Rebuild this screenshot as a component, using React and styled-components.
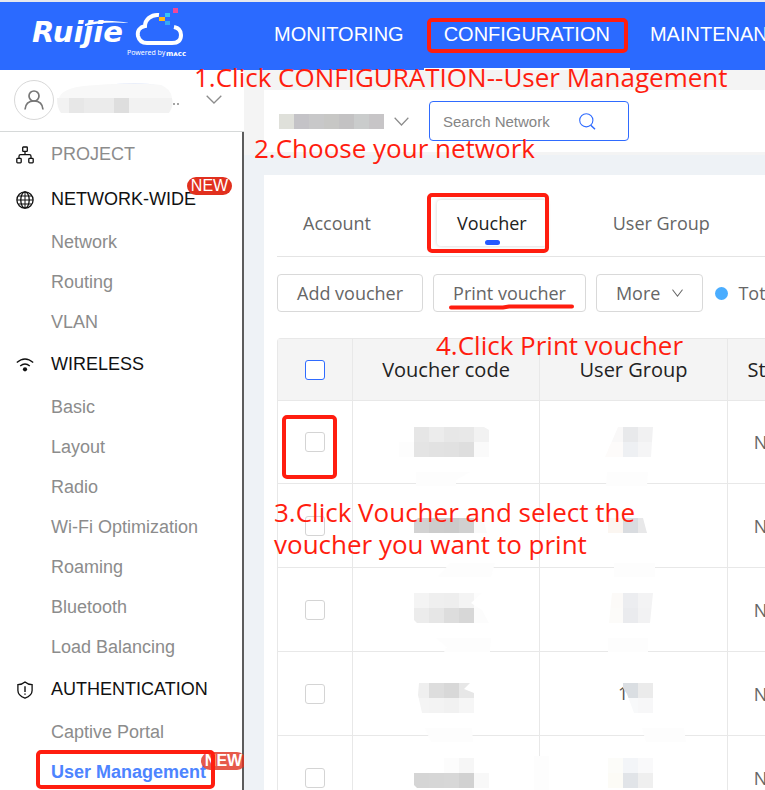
import React from 'react';
import styled, { createGlobalStyle } from 'styled-components';

const NAV = [
  { label: 'MONITORING' },
  { label: 'CONFIGURATION', active: true },
  { label: 'MAINTENANCE' },
];

const MENU = [
  { title: 'PROJECT', icon: 'project', muted: true, items: [] },
  {
    title: 'NETWORK-WIDE',
    icon: 'globe',
    isNew: true,
    items: ['Network', 'Routing', 'VLAN'],
  },
  {
    title: 'WIRELESS',
    icon: 'wifi',
    items: [
      'Basic',
      'Layout',
      'Radio',
      'Wi-Fi Optimization',
      'Roaming',
      'Bluetooth',
      'Load Balancing',
    ],
  },
  {
    title: 'AUTHENTICATION',
    icon: 'shield',
    items: ['Captive Portal', 'User Management'],
  },
];

const TABS = ['Account', 'Voucher', 'User Group'];

// Hidden values: 15px blocks [x, y, color], an optional outline and faint patches
const ROWS = [
  {
    id: 1,
    code: {
      clip: '-1,0 84,0 89,3 89,30 -1,30',
      blocks: [
        [14, 0, '#e6e6e6'], [29, 0, '#ececec'], [44, 0, '#e7e7e7'], [59, 0, '#e8e8e8'], [74, 0, '#f2f2f2'],
        [-1, 15, '#fdfdfd'], [14, 15, '#e4e4e4'], [29, 15, '#e2e2e2'], [44, 15, '#e1e1e1'], [59, 15, '#dedede'], [74, 15, '#fafafa'],
      ],
      patches: ['16,45 70,45 56,53 56,59 16,59'],
    },
    group: {
      clip: '30,0 65,0 63,30 17,30 24,14',
      blocks: [
        [20, 0, '#f9f8f8'], [35, 0, '#e8e9eb'], [50, 0, '#f1f1f2'],
        [16, 15, '#fdfbfa'], [20, 15, '#fdfbfa'], [35, 15, '#eef0f3'], [50, 15, '#f5f5f6'],
      ],
      patches: ['19,45 60,45 59,59 18,59'],
    },
  },
  {
    id: 2,
    code: {
      clip: '18,7 83,7 87,22 14,22 14,11',
      blocks: [[14, 7, '#d2d2d2'], [29, 7, '#cccccc'], [44, 7, '#cbcbcb'], [59, 7, '#d0d0d0'], [74, 7, '#fafafa']],
      patches: ['50,52 95,52 91,66 38,66'],
    },
    group: {
      clip: '20,7 55,7 59,22 20,22',
      blocks: [[20, 7, '#fbf6f1'], [35, 7, '#d9dce0'], [50, 7, '#e8e8e9']],
      patches: ['26,52 67,52 67,66 26,66'],
    },
  },
  {
    id: 3,
    code: {
      clip: '14,-2 82,-2 71,8 82,15 89,28 17,28 14,25',
      blocks: [
        [14, -2, '#f4f4f4'], [29, -2, '#efefef'], [44, -2, '#eeeeee'], [59, -2, '#f4f4f4'], [74, -2, '#fdfdfd'],
        [14, 13, '#ececec'], [29, 13, '#e6e6e6'], [44, 13, '#dddddd'], [59, 13, '#d7d7d7'], [74, 13, '#fcfcfc'],
      ],
      patches: ['36,43 91,43 90,57 44,57 47,52'],
    },
    group: {
      clip: '24,-2 65,-2 62,28 21,28',
      blocks: [
        [20, -2, '#fcfaf8'], [35, -2, '#ecedf0'], [50, -2, '#f3f3f4'],
        [20, 13, '#fcfbf9'], [35, 13, '#eaebee'], [50, 13, '#f2f2f3'],
      ],
      patches: ['20,43 60,43 60,57 20,57'],
    },
  },
  {
    id: 4,
    code: {
      clip: '19,4 70,4 64,10 74,14 74,34 22,34 18,16',
      blocks: [
        [14, 4, '#efefef'], [29, 4, '#dddddd'], [44, 4, '#d8d8d8'], [59, 4, '#e7e7e7'],
        [14, 19, '#f4f4f4'], [29, 19, '#f3f3f3'], [44, 19, '#f1f1f1'], [59, 19, '#f6f6f6'],
      ],
      patches: ['25,49 72,49 73,63 31,63'],
    },
    group: {
      text: '1',
      clip: '35,4 65,4 65,34 46,34 39,15 35,9',
      blocks: [
        [35, 4, '#dadee2'], [50, 4, '#ebebeb'],
        [35, 19, '#f8f9fa'], [50, 19, '#f7f7f8'],
      ],
      patches: ['54,49 96,49 98,63 58,63'],
    },
  },
  {
    id: 5,
    code: {
      clip: '14,-5 74,-5 89,10 89,25 17,25 14,22',
      blocks: [
        [44, -5, '#fcfcfc'], [59, -5, '#f6f6f6'],
        [14, 10, '#d5d5d5'], [29, 10, '#d6d6d6'], [44, 10, '#d7d7d7'], [59, 10, '#d1d1d1'], [74, 10, '#f8f8f8'],
      ],
      patches: ['134,-7 149,-7 149,30 134,30'],
    },
    group: {
      clip: '20,-5 65,-5 65,25 20,25',
      blocks: [
        [20, -5, '#fcfcf9'], [35, -5, '#f3f5f8'], [50, -5, '#f9f9fa'],
        [20, 10, '#fcfbf6'], [35, 10, '#e1e4e8'], [50, 10, '#efefef'],
      ],
      patches: [],
    },
  },
];

function Redacted({ id, data }) {
  return (
    <Mosaic width="90" height="30" viewBox="1 0 90 30" aria-hidden="true">
      <clipPath id={id}>
        <polygon points={data.clip} />
      </clipPath>
      {data.patches.map((points) => (
        <polygon key={points} points={points} fill="#fdfdfd" />
      ))}
      {data.text && (
        <text x="30" y="21" fontSize="18" fill="#555">
          {data.text}
        </text>
      )}
      <g clipPath={`url(#${id})`} shapeRendering="crispEdges">
        {data.blocks.map(([x, y, fill]) => (
          <rect key={`${x}-${y}`} x={x} y={y} width="15" height="15" fill={fill} />
        ))}
      </g>
    </Mosaic>
  );
}

function Logo() {
  return (
    <svg width="170" height="56" viewBox="0 0 170 56" role="img" aria-label="Ruijie MACC">
      <text
        x="0"
        y="34"
        fill="#fff"
        fontFamily="DejaVu Sans, sans-serif"
        fontSize="29"
        fontWeight="700"
        fontStyle="italic"
      >
        Ruijie
      </text>
      <path d="M53 16C68 11 84 13 97 15C82 14 68 14 53 18Z" fill="#fff" />
      <path
        d="M127 7C119 6 113 12 113 18C108 19 105 23 106 28C107 32 110 35 115 35H140C146 35 149 32 149 27C149 23 147 20 142 19"
        fill="none"
        stroke="#fff"
        strokeWidth="4"
      />
      <rect x="127" y="9" width="6" height="4" fill="#ffb91a" />
      <rect x="133" y="5" width="5" height="4" fill="#35c3f7" />
      <rect x="133" y="13" width="5" height="4" fill="#35a9f7" />
      <rect x="141" y="0" width="5" height="5" fill="#f0489b" />
      <text x="95" y="47" fill="#fff" fontFamily="Noto Sans, sans-serif" fontSize="7">
        Powered by
      </text>
      <text x="134" y="48" fill="#fff" fontFamily="DejaVu Sans, sans-serif" fontSize="7" fontWeight="700">
        mᴀcc
      </text>
    </svg>
  );
}

function Chevron({ width, height, color = '#8c8c8c' }) {
  return (
    <svg width={width} height={height} viewBox="0 0 16 9" preserveAspectRatio="none" fill="none" stroke={color} strokeWidth="1.3" aria-hidden="true">
      <path d="M.7.7 8 8 15.3.7" />
    </svg>
  );
}

function MenuIcon({ name }) {
  return (
    <svg width="18" height="18" viewBox="0 0 18 18" fill="none" stroke="#111" strokeWidth="1.3" aria-hidden="true">
      {name === 'project' && (
        <>
          <rect x="6.7" y="1" width="4.6" height="4.4" rx=".6" />
          <rect x=".8" y="12.4" width="4.4" height="4.4" rx=".8" />
          <rect x="12.8" y="12.4" width="4.4" height="4.4" rx=".8" />
          <path d="M9 5.4V8.6M3 12.2V10.3Q3 8.7 4.6 8.7H13.4Q15 8.7 15 10.3V12.2" />
        </>
      )}
      {name === 'globe' && (
        <>
          <circle cx="9" cy="9" r="8.1" />
          <ellipse cx="9" cy="9" rx="4.2" ry="8.1" />
          <path d="M1 9H17M2.2 5H15.8M2.2 13H15.8M9 1V17" strokeWidth="1" />
        </>
      )}
      {name === 'wifi' && (
        <>
          <path d="M.8 6.6Q9-.6 17.2 6.6M4.2 10.1Q9 5.9 13.8 10.1" />
          <circle cx="9" cy="13.3" r="2.1" fill="#111" stroke="none" />
        </>
      )}
      {name === 'shield' && (
        <>
          <path d="M9 1C7 2.8 4.5 3.6 1.9 3.7V9.6C1.9 13.4 5 15.8 9 17.2C13 15.8 16.1 13.4 16.1 9.6V3.7C13.5 3.6 11 2.8 9 1Z" />
          <path d="M9 5.2V11M9 12.4V13.8" strokeWidth="1.4" />
        </>
      )}
    </svg>
  );
}

function Sidebar() {
  return (
    <Side>
      <Profile>
        <Avatar>
          <svg width="20" height="20" viewBox="0 0 20 20" fill="none" stroke="#777" strokeWidth="1.7" aria-hidden="true">
            <circle cx="10" cy="6" r="5" />
            <path d="M1 19.5C1.4 14 5 11 10 11S18.6 14 19 19.5" />
          </svg>
        </Avatar>
        <svg width="124" height="34" viewBox="0 0 124 34" aria-hidden="true">
          <path d="M46 3Q76-3 106 3Z" fill="#dfe7fb" />
          <path d="M2 15Q6 3 40 2Q78-1 104 2Q114 6 115 15Z" fill="#f8f8f8" />
          <path d="M0 15H115Q117 23 112 30H4Q0 25 0 15Z" fill="#f2f2f2" />
          <rect x="12" y="15" width="15" height="15" fill="#e7e7e7" />
          <rect x="27" y="15" width="30" height="15" fill="#ebebeb" />
          <rect x="57" y="15" width="15" height="15" fill="#dedede" />
          <path d="M116 21h2M120 21h2" stroke="#888" strokeWidth="1.5" />
        </svg>
        <PlainButton type="button" aria-label="Switch account">
          <Chevron width={16} height={9} />
        </PlainButton>
      </Profile>
      <Menu>
        {MENU.map((group) => (
          <React.Fragment key={group.title}>
            <GroupLink href="#" $muted={group.muted}>
              <MenuIcon name={group.icon} />
              <span>{group.title}</span>
              {group.isNew && <Badge>NEW</Badge>}
            </GroupLink>
            {group.items.map((item) => (
              <ItemLink key={item} href="#" $active={item === 'User Management'}>
                {item}
                {item === 'User Management' && <Badge $faded>NEW</Badge>}
              </ItemLink>
            ))}
          </React.Fragment>
        ))}
      </Menu>
    </Side>
  );
}

function NetworkPicker() {
  const shades = ['#dfe0da', '#c4c3c7', '#c8c8c9', '#c7c7c5', '#c3c2c3', '#cacccc', '#c7c5c7'];
  return (
    <NetworkBar>
      <NetworkButton type="button" aria-label="Choose network">
        <svg width="105" height="15" viewBox="0 0 105 15" shapeRendering="crispEdges" aria-hidden="true">
          {shades.map((fill, i) => (
            <rect key={i} x={i * 15} width="15" height="15" fill={fill} />
          ))}
        </svg>
        <Chevron width={15} height={9} />
      </NetworkButton>
      <Search>
        <input type="text" placeholder="Search Network" aria-label="Search Network" />
        <PlainButton type="button" aria-label="Search">
          <svg width="17" height="17" viewBox="0 0 17 17" fill="none" stroke="#2f6bff" strokeWidth="1.1" aria-hidden="true">
            <circle cx="7.3" cy="7.3" r="6.6" />
            <path d="M11.8 12.2 16 16.2" strokeWidth="1.5" />
          </svg>
        </PlainButton>
      </Search>
    </NetworkBar>
  );
}

function VoucherTable() {
  return (
    <Table>
      <colgroup>
        <col width="75" />
        <col width="187" />
        <col width="188" />
        <col width="98" />
      </colgroup>
      <thead>
        <tr>
          <th>
            <Checkbox type="checkbox" aria-label="Select all vouchers" $accent />
          </th>
          <th>Voucher code</th>
          <th>User Group</th>
          <th>Status</th>
        </tr>
      </thead>
      <tbody>
        {ROWS.map((row) => (
          <tr key={row.id}>
            <td>
              <Checkbox type="checkbox" aria-label={`Select voucher ${row.id}`} />
            </td>
            <td>
              <Redacted id={`code-${row.id}`} data={row.code} />
            </td>
            <td>
              <Redacted id={`group-${row.id}`} data={row.group} />
            </td>
            <td>None</td>
          </tr>
        ))}
      </tbody>
    </Table>
  );
}

function Guide() {
  return (
    <Overlay>
      <Frame $x={427} $y={18} $w={201} $h={35} />
      <Frame $x={427} $y={193} $w={122} $h={60} />
      <Frame $x={282} $y={415} $w={55} $h={64} />
      <Frame $x={36} $y={750} $w={179} $h={39} />
      <Underline width="126" height="6" viewBox="0 0 126 6" aria-hidden="true">
        <path d="M2 3.5H54L60 2.5H123" fill="none" stroke="#ff1d0f" strokeWidth="4" strokeLinecap="round" />
      </Underline>
      <Note $x={194} $y={61}>1.Click CONFIGURATION--User Management</Note>
      <Note $x={254} $y={132}>2.Choose your network</Note>
      <Note $x={274} $y={496}>
        3.Click Voucher and select the
        <br />
        voucher you want to print
      </Note>
      <Note $x={436} $y={329}>4.Click Print voucher</Note>
    </Overlay>
  );
}

function App() {
  return (
    <Page>
      <GlobalStyle />
      <TopBar>
        <Logo />
        <nav>
          {NAV.map((item) => (
            <NavLink key={item.label} href="#" $active={item.active}>
              {item.label}
            </NavLink>
          ))}
        </nav>
      </TopBar>
      <Body>
        <Sidebar />
        <Main>
          <NetworkArea>
            <NetworkPicker />
          </NetworkArea>
          <Card>
            <Tabs role="tablist">
              {TABS.map((tab) => (
                <Tab key={tab} type="button" role="tab" aria-selected={tab === 'Voucher'} $active={tab === 'Voucher'}>
                  {tab}
                </Tab>
              ))}
            </Tabs>
            <Toolbar>
              <Button type="button">Add voucher</Button>
              <Button type="button">Print voucher</Button>
              <Button type="button">
                More
                <Chevron width={11} height={8} color="#666" />
              </Button>
              <Total>Total</Total>
            </Toolbar>
            <VoucherTable />
          </Card>
        </Main>
      </Body>
      <Guide />
    </Page>
  );
}

const GlobalStyle = createGlobalStyle`
  * {
    box-sizing: border-box;
  }

  body {
    margin: 0;
    font-family: 'Liberation Sans', Arial, sans-serif;
    font-size: 18px;
    background: #fff;
  }

  a {
    color: inherit;
    text-decoration: none;
  }

  button,
  input {
    font: inherit;
    color: inherit;
  }

  svg {
    display: block;
    flex-shrink: 0;
  }
`;

const Page = styled.div`
  position: relative;
  display: flex;
  flex-direction: column;
  height: 100vh;
  overflow: hidden;
`;

const TopBar = styled.header`
  display: flex;
  flex-shrink: 0;
  height: 70px;
  padding: 6px 0 0 32px;
  border-top: 2px solid #e6e8ee;
  background: #2b6aff;
  color: #fff;

  nav {
    display: flex;
    margin: -6px 0 0 52px;
  }
`;

const NavLink = styled.a`
  flex-shrink: 0;
  padding: 0 20px;
  border-bottom: 2px solid ${(props) => (props.$active ? '#fff' : 'transparent')};
  font-size: 20px;
  line-height: 64px;
`;

const Body = styled.div`
  display: flex;
  flex: 1;
  min-height: 0;
`;

const Side = styled.aside`
  display: flex;
  flex-direction: column;
  flex: 0 0 244px;
  overflow: hidden;
`;

const Profile = styled.div`
  display: flex;
  align-items: center;
  flex-shrink: 0;
  height: 62px;
  padding: 0 20px 2px 14px;
  border-bottom: 1px solid #d6d9d9;

  button {
    margin-left: auto;
  }
`;

const Avatar = styled.div`
  display: flex;
  align-items: center;
  justify-content: center;
  width: 40px;
  height: 40px;
  margin-right: 3px;
  border: 1px solid #d8d8d8;
  border-radius: 50%;
`;

const PlainButton = styled.button`
  padding: 2px;
  border: 0;
  background: none;
`;

const Menu = styled.nav`
  flex: 1;
  border-right: 2px solid #5c5c5c;
`;

const GroupLink = styled.a`
  position: relative;
  display: flex;
  align-items: center;
  gap: 17px;
  height: 45px;
  padding-left: 16px;
  color: ${(props) => (props.$muted ? '#8c8c8c' : '#111')};
`;

const ItemLink = styled.a`
  position: relative;
  display: block;
  padding-left: 51px;
  line-height: 40px;
  color: ${(props) => (props.$active ? '#4d84ff' : '#8c8c8c')};
  font-weight: ${(props) => (props.$active ? 700 : 400)};
`;

const Badge = styled.span`
  position: absolute;
  top: 0;
  left: ${(props) => (props.$faded ? 201 : 187)}px;
  width: 45px;
  border-radius: 9px;
  background: #e1301e;
  color: #fff;
  font-size: 16px;
  line-height: 18px;
  text-align: center;
  opacity: ${(props) => (props.$faded ? 0.8 : 1)};
`;

const Main = styled.main`
  flex: 1;
  min-width: 0;
  overflow: hidden;
  background: #eef2f6;
`;

const NetworkArea = styled.div`
  padding: 20px 0 3px 20px;
  background: #f4f4f4;
`;

const NetworkBar = styled.div`
  display: flex;
  align-items: center;
  gap: 20px;
  height: 62px;
  padding-left: 15px;
  background: #fff;
`;

const NetworkButton = styled.button`
  display: flex;
  align-items: center;
  gap: 10px;
  padding: 0;
  border: 0;
  background: none;
`;

const Search = styled.div`
  display: flex;
  align-items: center;
  width: 200px;
  height: 40px;
  padding: 0 30px 0 13px;
  border: 1px solid #2f6bff;
  border-radius: 4px;

  input {
    flex: 1;
    min-width: 0;
    padding: 0;
    border: 0;
    outline: 0;
    font-size: 15px;
  }

  input::placeholder {
    color: #858585;
  }
`;

const Card = styled.section`
  margin: 20px 0 0 20px;
  padding: 18px 0 0 13px;
  background: #fff;
  color: #666;
  font-family: 'Open Sans', 'Noto Sans', sans-serif;
`;

const Tabs = styled.div`
  display: flex;
  gap: 46px;
  height: 64px;
  padding: 7px 0 10px 6px;
  border-bottom: 1px solid #e4e4e4;
`;

const Tab = styled.button`
  position: relative;
  flex-shrink: 0;
  padding: 0 20px;
  border: 0;
  border-radius: 4px;
  background: #fff;
  color: ${(props) => (props.$active ? '#222' : '#666')};
  box-shadow: ${(props) => (props.$active ? '0 0 4px rgba(0, 0, 0, 0.18)' : 'none')};

  &::after {
    content: '';
    position: absolute;
    bottom: 1px;
    left: calc(50% - 7px);
    display: ${(props) => (props.$active ? 'block' : 'none')};
    width: 15px;
    height: 5px;
    border-radius: 3px;
    background: #2458ff;
  }
`;

const Toolbar = styled.div`
  display: flex;
  align-items: center;
  gap: 10px;
  padding: 17px 0 26px;
`;

const Button = styled.button`
  display: flex;
  align-items: center;
  flex-shrink: 0;
  gap: 12px;
  height: 38px;
  padding: 0 19px;
  border: 1px solid #d9d9d9;
  border-radius: 4px;
  background: #fff;
`;

const Total = styled.span`
  display: flex;
  align-items: center;
  gap: 10px;
  margin-left: 2px;

  &::before {
    content: '';
    width: 13px;
    height: 13px;
    border-radius: 50%;
    background: #4aadff;
  }
`;

const Table = styled.table`
  width: 548px;
  table-layout: fixed;
  border-collapse: separate;
  border-spacing: 0;
  border-top: 1px solid #e8e8e8;
  border-left: 1px solid #e8e8e8;
  border-radius: 4px 0 0 0;

  th,
  td {
    height: 84px;
    padding: 0;
    border-right: 1px solid #e8e8e8;
    border-bottom: 1px solid #e8e8e8;
    text-align: center;
    vertical-align: middle;
  }

  th {
    height: 62px;
    background: #f4f4f4;
    color: #222;
    font-size: 20px;
    font-weight: 400;
  }

  tbody tr:first-child td {
    height: 83px;
  }
`;

const Checkbox = styled.input`
  appearance: none;
  display: block;
  width: 20px;
  height: 20px;
  margin: 0 auto;
  border: 1px solid ${(props) => (props.$accent ? '#2f6bff' : '#d4d4d4')};
  border-radius: 3px;
  background: #fff;
`;

const Mosaic = styled.svg`
  margin: 0 auto;
  overflow: visible;
`;

// Tutorial marks drawn over the page
const Overlay = styled.div`
  position: absolute;
  inset: 0;
  pointer-events: none;
`;

const Frame = styled.div`
  position: absolute;
  top: ${(props) => props.$y}px;
  left: ${(props) => props.$x}px;
  width: ${(props) => props.$w}px;
  height: ${(props) => props.$h}px;
  border: 4px solid #ff1d0f;
  border-radius: 5px;
`;

const Underline = styled.svg`
  position: absolute;
  top: 304px;
  left: 449px;
`;

const Note = styled.p`
  position: absolute;
  top: ${(props) => props.$y}px;
  left: ${(props) => props.$x}px;
  margin: 0;
  color: #ff1d0f;
  font-family: 'Open Sans', 'Noto Sans', sans-serif;
  font-size: 26px;
  line-height: 32px;
  white-space: nowrap;
`;

export default App;
